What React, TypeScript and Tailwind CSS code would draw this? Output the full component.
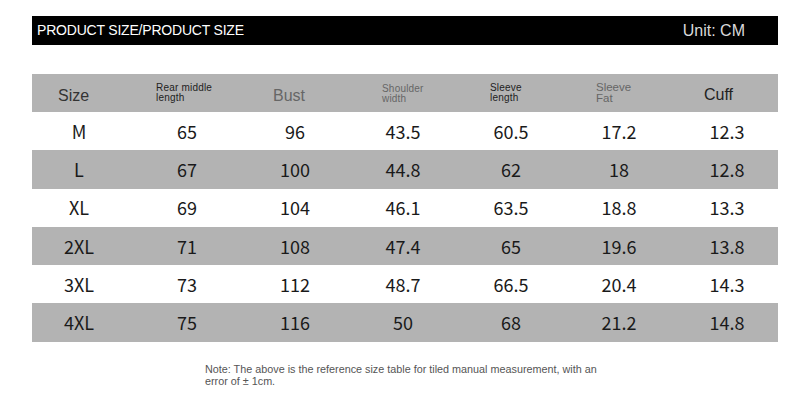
import React from 'react';

const rows: string[][] = [
  ['M', '65', '96', '43.5', '60.5', '17.2', '12.3'],
  ['L', '67', '100', '44.8', '62', '18', '12.8'],
  ['XL', '69', '104', '46.1', '63.5', '18.8', '13.3'],
  ['2XL', '71', '108', '47.4', '65', '19.6', '13.8'],
  ['3XL', '73', '112', '48.7', '66.5', '20.4', '14.3'],
  ['4XL', '75', '116', '50', '68', '21.2', '14.8'],
];

const colWidths = ['w-[101px]', 'w-[108px]', 'w-[108px]', 'w-[108px]', 'w-[108px]', 'w-[108px]', 'w-[105px]'];
const cellPad = ['pr-[7px]', '', '', '', '', '', 'pl-[3px]'];

function App(): React.ReactNode {
  return (
    <div className="w-[790px] h-[420px] bg-white font-['Liberation_Sans',Arial,sans-serif]">
      <div className="pt-4 pl-8">
        <div className="w-[746px] h-[29px] bg-black flex items-center justify-between pl-[5px] pr-[33px]">
          <span className="text-white text-[14px] tracking-[-0.2px]">PRODUCT SIZE/PRODUCT SIZE</span>
          <span className="text-[#d9d9d9] text-[16px]">Unit: CM</span>
        </div>

        <div className="mt-[29px] w-[746px]">
          {/* header row */}
          <div className="h-[38px] bg-[#b3b3b3] flex items-center">
            <div className={`${colWidths[0]} pl-[26px] pt-[5px] text-[16px] text-[#333]`}>Size</div>
            <div className={`${colWidths[1]} pl-[23px] text-[10px] leading-[10px] text-[#222] tracking-[0.2px]`}>
              <div>Rear middle</div>
              <div>length</div>
            </div>
            <div className={`${colWidths[2]} pl-[32px] pt-[5px] text-[16px] text-[#666]`}>Bust</div>
            <div className={`${colWidths[3]} pl-[33px] pt-[2px] text-[10px] leading-[10px] text-[#666] tracking-[0.2px]`}>
              <div>Shoulder</div>
              <div>width</div>
            </div>
            <div className={`${colWidths[4]} pl-[33px] text-[10px] leading-[10px] text-[#222] tracking-[0.2px]`}>
              <div>Sleeve</div>
              <div>length</div>
            </div>
            <div className={`${colWidths[5]} pl-[31px] text-[11.5px] leading-[11px] text-[#666]`}>
              <div>Sleeve</div>
              <div>Fat</div>
            </div>
            <div className={`${colWidths[6]} pl-[31px] pt-[4px] text-[16px] text-[#222]`}>Cuff</div>
          </div>

          {rows.map((row, rowIndex) => (
            <div
              key={row[0]}
              className={`h-[38.3px] flex items-center font-['Noto_Sans_CJK_SC','Noto_Sans',sans-serif] text-[18px] text-[#1a1a1a] ${
                rowIndex % 2 === 1 ? 'bg-[#b3b3b3]' : 'bg-white'
              }`}
            >
              {row.map((cell, cellIndex) => (
                <div key={cellIndex} className={`${colWidths[cellIndex]} ${cellPad[cellIndex]} text-center`}>
                  {cell}
                </div>
              ))}
            </div>
          ))}
        </div>

        <p className="mt-[21px] ml-[173px] w-[410px] text-[10.8px] leading-[12px] text-[#555]">
          Note: The above is the reference size table for tiled manual measurement, with an error of ± 1cm.
        </p>
      </div>
    </div>
  );
}

export default App;
